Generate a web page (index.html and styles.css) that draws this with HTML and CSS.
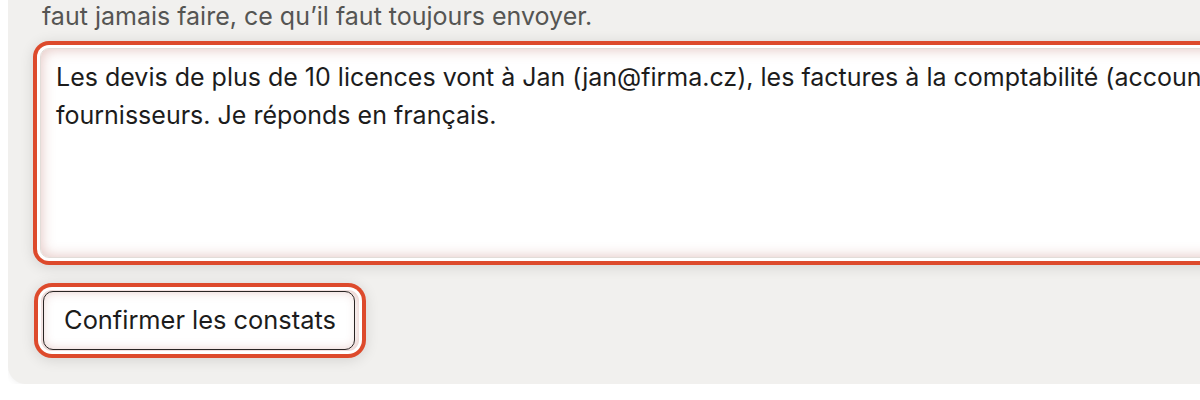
FILE: index.html
```html
<!DOCTYPE html>
<html lang="fr">
<head>
<meta charset="utf-8">
<title>Constats</title>
<link rel="stylesheet" href="styles.css">
</head>
<body>
<section class="panel">
  <p class="intro">faut jamais faire, ce qu’il faut toujours envoyer.</p>
  <div class="field">
    <textarea class="notes" wrap="off" spellcheck="false">Les devis de plus de 10 licences vont à Jan (jan@firma.cz), les factures à la comptabilité (accounting@firma.cz), les relances aux
fournisseurs. Je réponds en français.</textarea>
  </div>
  <div class="actions">
    <button class="confirm" type="button">Confirmer les constats</button>
  </div>
</section>
</body>
</html>
```

FILE: styles.css
```css
html, body {
  overflow: hidden;
}
body {
  margin: 0 0 0 8px;
  background: #ffffff;
  font-family: Inter, "Noto Sans", sans-serif;
}
.panel {
  width: 1500px;
  background: #f1f0ee;
  border-radius: 0 0 0 18px;
  padding: 0 0 33px 32px;
  box-shadow: 0 1px 6px rgba(0, 0, 0, 0.06);
}
.intro {
  margin: 0 0 16px 2px;
  font-size: 25px;
  line-height: 32px;
  color: #555553;
}
.field {
  display: flex;
}
.notes {
  box-sizing: border-box;
  width: 1440px;
  height: 210px;
  resize: none;
  overflow: hidden;
  margin: 0;
  padding: 10px 15px;
  border: 1px solid #e2dcd8;
  border-radius: 9px;
  background: #ffffff;
  font-family: Inter, "Noto Sans", sans-serif;
  font-size: 25px;
  line-height: 37.5px;
  color: #1c1c1c;
  outline: none;
  box-shadow: 0 0 0 3px #ffffff, 0 0 0 7px #dd4a2c, 0 2px 14px 7px rgba(0, 0, 0, 0.12),
    inset 0 0 14px rgba(170, 70, 60, 0.34);
}
.actions {
  display: flex;
  margin-top: 32px;
}
.confirm {
  position: relative;
  box-sizing: border-box;
  width: 318px;
  height: 61px;
  margin: 0 0 0 1px;
  padding: 0 0 2px;
  border: none;
  border-radius: 11px;
  background: #ffffff;
  font-family: Inter, "Noto Sans", sans-serif;
  font-size: 25.4px;
  color: #1c1c1c;
  cursor: pointer;
  box-shadow: 0 0 0 3px #ffffff, 0 0 0 7px #dd4a2c, 0 2px 14px 7px rgba(0, 0, 0, 0.12),
    inset 0 0 12px rgba(170, 70, 60, 0.36);
}
.confirm::after {
  content: "";
  position: absolute;
  top: 1px;
  left: 2px;
  right: 4px;
  bottom: 1px;
  border: 1px solid #2a2524;
  border-radius: 10px;
  pointer-events: none;
}
```
